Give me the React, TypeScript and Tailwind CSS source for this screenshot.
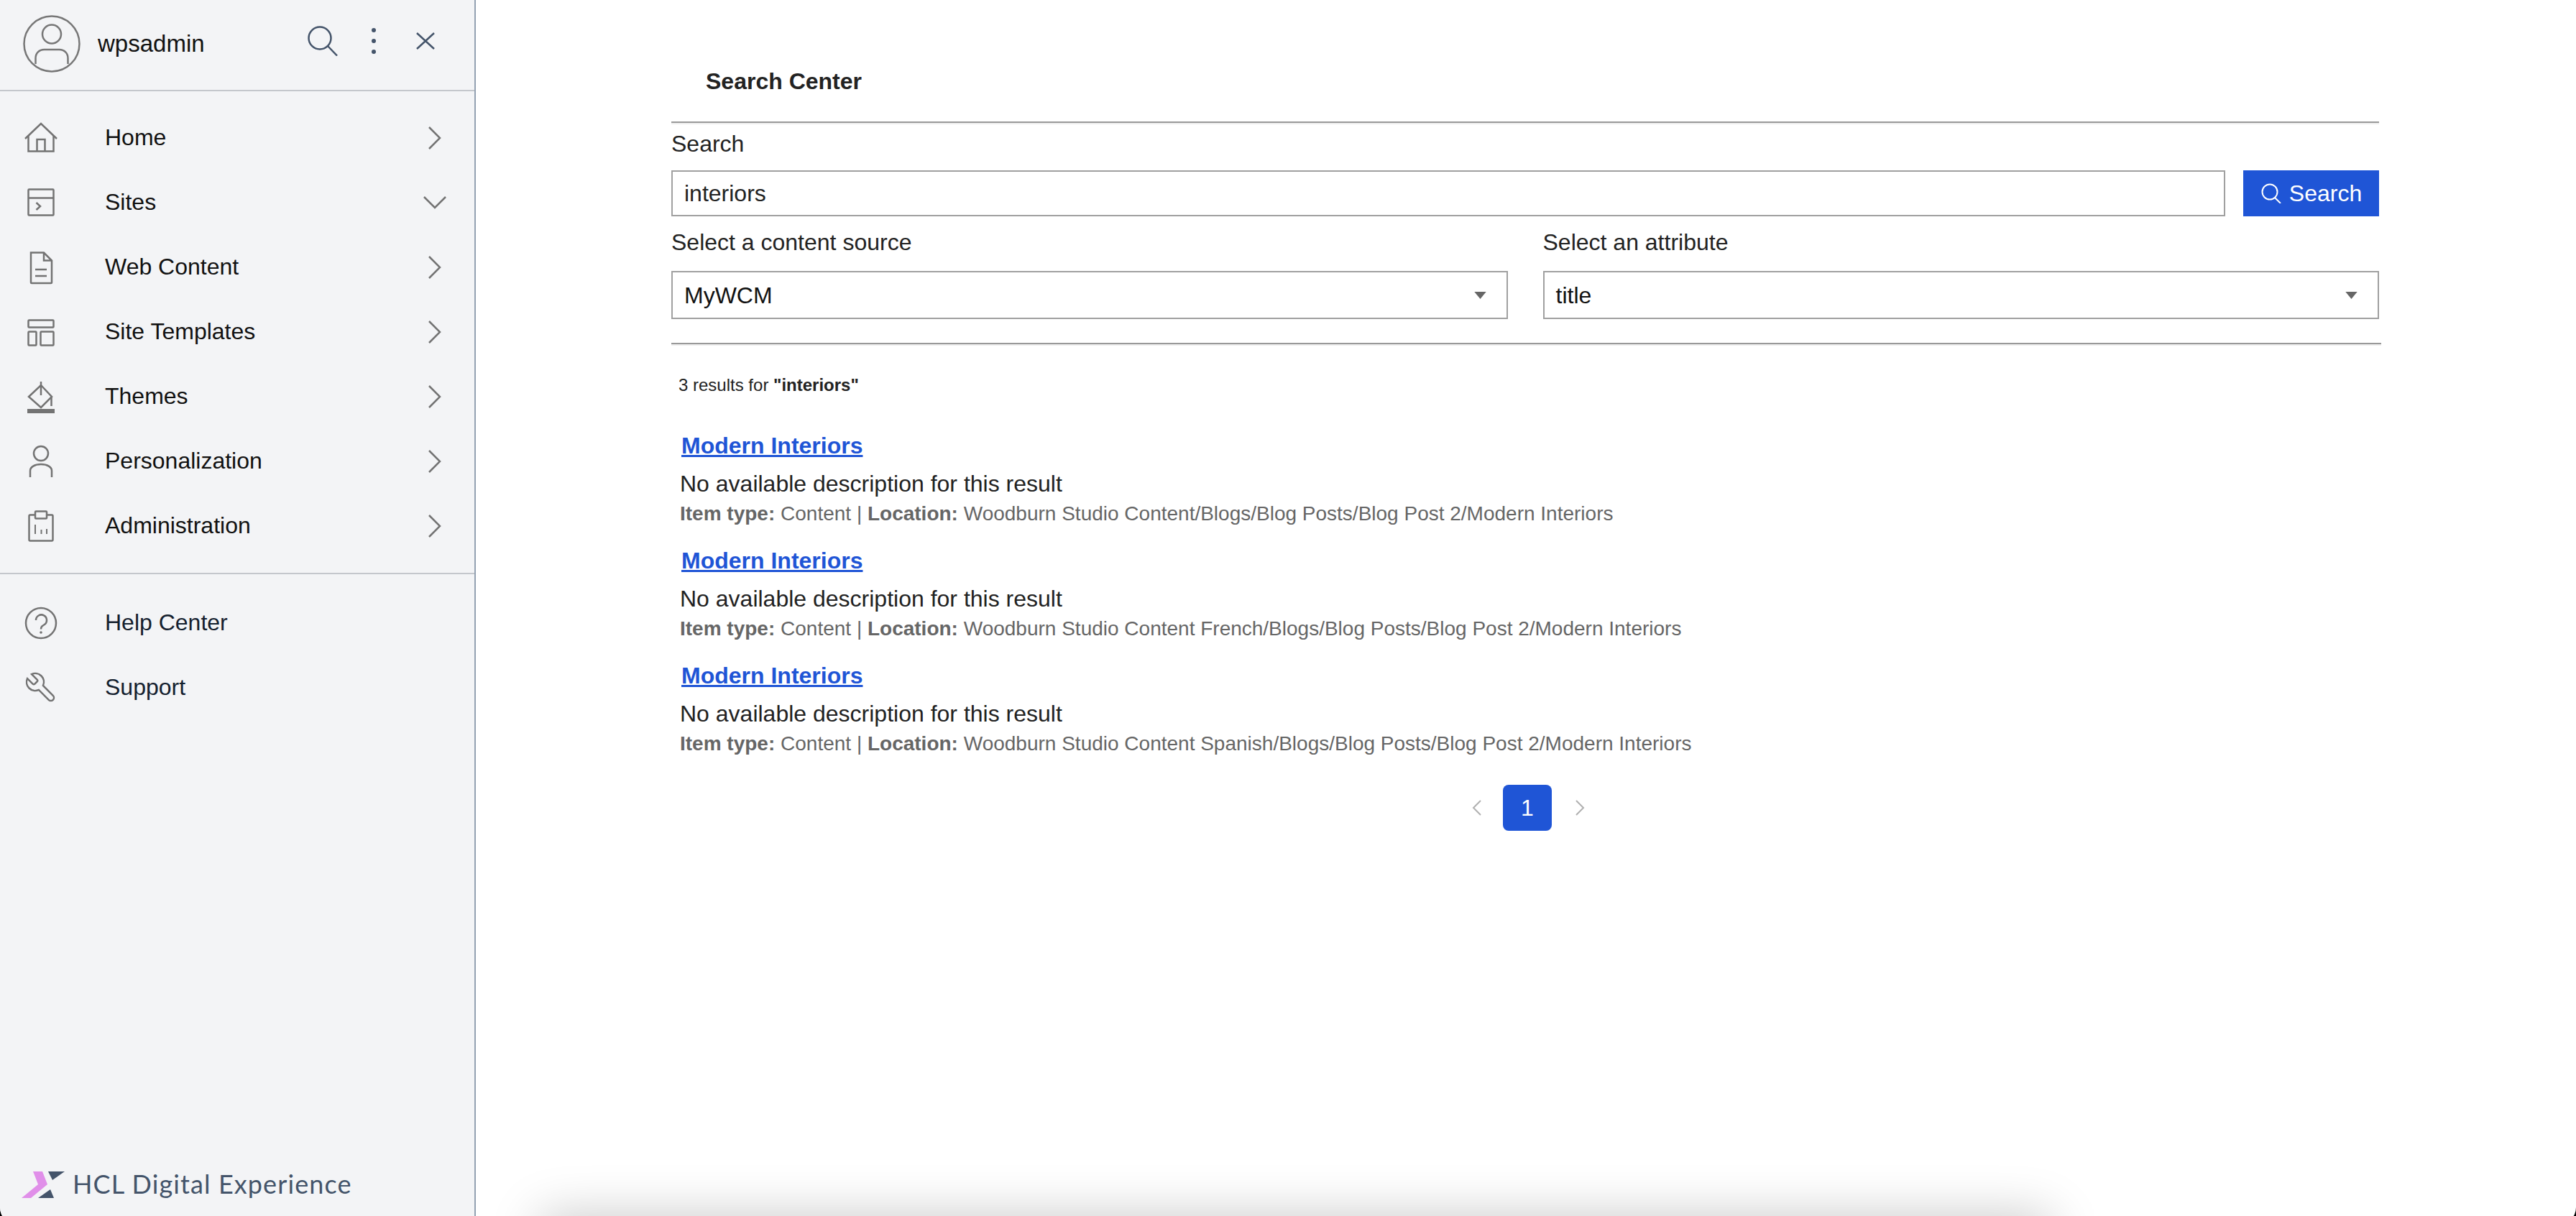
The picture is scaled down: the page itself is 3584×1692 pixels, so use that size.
const ink = '#737373';

const ChevronRight = () => (
  <svg width="20" height="32" viewBox="0 0 20 32" fill="none" stroke={ink} strokeWidth="2.5">
    <path d="M2 1l15 15L2 31" />
  </svg>
);

const ChevronDown = () => (
  <svg width="32" height="20" viewBox="0 0 32 20" fill="none" stroke={ink} strokeWidth="2.5">
    <path d="M1 2l15 15L31 2" />
  </svg>
);

const Icon = ({ children }: { children: React.ReactNode }) => (
  <svg width="48" height="48" viewBox="0 0 48 48" fill="none" stroke={ink} strokeWidth="2.5" className="shrink-0">
    {children}
  </svg>
);

const icons = {
  home: (
    <>
      <path d="M2 25L24 4l22 21" />
      <path d="M6.5 21v21.5h35V21" />
      <path d="M18.5 42V26h11v16" />
    </>
  ),
  sites: (
    <>
      <rect x="6.5" y="5.5" width="35" height="36" rx="1" />
      <path d="M6.5 17.5h35" />
      <path d="M17.5 24l5.5 5-5.5 5" />
    </>
  ),
  content: (
    <>
      <path d="M10 3.5h18l11 11V45a1 1 0 0 1-1 1H11a1 1 0 0 1-1-1z" />
      <path d="M28 3.5v11h11" />
      <path d="M16 27h16M16 36h16" />
    </>
  ),
  templates: (
    <>
      <rect x="6.5" y="7.5" width="35" height="10" rx="1" />
      <rect x="6.5" y="23.5" width="11" height="19" rx="1" />
      <rect x="23.5" y="23.5" width="18" height="19" rx="1" />
    </>
  ),
  themes: (
    <>
      <path d="M24 8L39 24 24 39 7 24z" />
      <path d="M24 3v19" />
      <path d="M38.5 24v13" />
      <rect x="5" y="41" width="38" height="6" fill={ink} stroke="none" />
    </>
  ),
  person: (
    <>
      <circle cx="24" cy="13" r="10" />
      <path d="M9 46v-9c0-5 6-9 15-9s15 4 15 9v9" />
    </>
  ),
  admin: (
    <>
      <rect x="7.5" y="8.5" width="33" height="36" rx="1.5" />
      <rect x="16" y="3.5" width="16" height="10" rx="1" fill="#f3f4f6" />
      <path d="M16 22v13M24.5 29v6M32 28v7" strokeWidth="2" />
    </>
  ),
  help: (
    <>
      <ellipse cx="24" cy="24" rx="21" ry="21" />
      <path d="M17 20a7.5 7.5 0 1 1 11.5 6.3c-3 1.9-4.5 2.7-4.5 6.2" />
      <circle cx="24" cy="37" r="1.8" fill={ink} stroke="none" />
    </>
  ),
  support: (
    <g transform="translate(48 0) scale(-2 2)" strokeWidth="1.25">
      <path d="M14.7 6.3a1 1 0 0 0 0 1.4l1.6 1.6a1 1 0 0 0 1.4 0l3.77-3.77a6 6 0 0 1-7.94 7.94l-6.91 6.91a2.12 2.12 0 0 1-3-3l6.91-6.91a6 6 0 0 1 7.94-7.94l-3.76 3.76z" />
    </g>
  ),
};

const menu = [
  { label: 'Home', icon: icons.home },
  { label: 'Sites', icon: icons.sites, open: true },
  { label: 'Web Content', icon: icons.content },
  { label: 'Site Templates', icon: icons.templates },
  { label: 'Themes', icon: icons.themes },
  { label: 'Personalization', icon: icons.person },
  { label: 'Administration', icon: icons.admin },
];

const results = [
  'Woodburn Studio Content/Blogs/Blog Posts/Blog Post 2/Modern Interiors',
  'Woodburn Studio Content French/Blogs/Blog Posts/Blog Post 2/Modern Interiors',
  'Woodburn Studio Content Spanish/Blogs/Blog Posts/Blog Post 2/Modern Interiors',
];

const Rule = ({ className }: { className: string }) => (
  <div className={`h-[2px] bg-[#999999] shadow-[0_2px_0_#eeeeee] ${className}`} />
);

const Select = ({ value }: { value: string }) => (
  <div className="flex h-[67px] items-center justify-between border-2 border-[#a0a0a0] pl-4 pr-[28px] text-[#111111]">
    <span className="pt-[1px]">{value}</span>
    <svg width="17" height="10" viewBox="0 0 18 11" fill="#666666">
      <path d="M0 0h18L9 11z" />
    </svg>
  </div>
);

const Sidebar = () => (
  <aside className="flex h-full w-[662px] shrink-0 flex-col border-r-2 border-[#93a1b1] bg-[#f3f4f6]">
    <header className="flex h-[127px] shrink-0 items-center border-b-2 border-[#c4c7cc] pl-[32px] pb-[4px]">
      <svg width="80" height="80" viewBox="0 0 80 80" fill="none" stroke="#777777" strokeWidth="2.5">
        <circle cx="40" cy="40" r="38.5" />
        <circle cx="40" cy="26.5" r="13" />
        <path d="M17.5 68v-8c0-7 5-12 12-12h21c7 0 12 5 12 12v8" />
      </svg>
      <span className="ml-[24px] text-[33px] text-[#111111]">wpsadmin</span>
      <svg width="42" height="42" viewBox="0 0 42 42" fill="none" stroke="#44546a" strokeWidth="2.5" className="mb-[8px] ml-[143px]">
        <circle cx="17" cy="17" r="15.5" />
        <path d="M28 28l13 13.500" />
      </svg>
      <svg width="8" height="38" viewBox="0 0 8 38" fill="#44546a" className="mb-[8px] ml-[46px]">
        <circle cx="4" cy="4" r="3" />
        <circle cx="4" cy="19" r="3" />
        <circle cx="4" cy="34" r="3" />
      </svg>
      <svg width="26" height="24" viewBox="0 0 26 24" fill="none" stroke="#44546a" strokeWidth="2.5" className="mb-[8px] ml-[55px]">
        <path d="M1 1l24 22M25 1L1 23" />
      </svg>
    </header>
    <nav className="pt-[20px]">
      {menu.map((item) => (
        <div key={item.label} className="flex h-[90px] items-center pl-[33px] text-[32px] text-[#111111]">
          <Icon>{item.icon}</Icon>
          <span className="ml-[65px] flex-1 pb-[3px]">{item.label}</span>
          {item.open ? (
            <span className="mr-[39px]">
              <ChevronDown />
            </span>
          ) : (
            <span className="mr-[45px]">
              <ChevronRight />
            </span>
          )}
        </div>
      ))}
    </nav>
    <div className="mt-[20px] h-[2px] bg-[#c4c7cc]" />
    <div className="pt-[23px]">
      {[
        { label: 'Help Center', icon: icons.help },
        { label: 'Support', icon: icons.support },
      ].map((item) => (
        <div key={item.label} className="flex h-[90px] items-center pl-[33px] text-[32px] text-[#14202e]">
          <Icon>{item.icon}</Icon>
          <span className="ml-[65px] pb-[2px]">{item.label}</span>
        </div>
      ))}
    </div>
    <div className="mt-auto flex items-center pb-[34px] pl-[30px]">
      <svg width="60" height="38" viewBox="0 0 60 38">
        <path d="M16 0h13l7 18L13 37H0l23-19z" fill="#e08fe9" />
        <path d="M37 0h23L43 12z" fill="#44546a" />
        <path d="M23 37h22l-5-12z" fill="#44546a" />
      </svg>
      <span className="mb-[3px] ml-[11px] font-['Lato',sans-serif] text-[36px] leading-[40px] tracking-[1.1px] text-[#44546a]">HCL Digital Experience</span>
    </div>
  </aside>
);

export default function App() {
  return (
    <div className="h-[1692px] overflow-hidden bg-black">
      {/* screenshot has the window's rounded corners at the bottom edge */}
      <div className="flex h-[1704px] overflow-hidden rounded-b-[24px] bg-white font-['Liberation_Sans',Arial,sans-serif] text-[32px] leading-[36px]">
        <Sidebar />
        <main className="relative flex-1 pl-[272px]">
          <div className="w-[2376px] pt-[95px]">
            <h1 className="pl-[48px] font-bold text-[#222222]">Search Center</h1>
            <Rule className="mt-[38px]" />
            <div className="mt-[11px] text-[#222222]">Search</div>
            <div className="mt-[19px] flex gap-[25px]">
              <input
                readOnly
                value="interiors"
                className="h-[64px] min-w-0 flex-1 border-2 border-[#a0a0a0] pl-4 text-[#222222] outline-none"
              />
              <button className="flex h-[64px] w-[189px] shrink-0 items-center justify-center gap-[10px] bg-[#1f55d6] text-white">
                <svg width="30" height="28" viewBox="0 0 30 28" fill="none" stroke="#ffffff" strokeWidth="2">
                  <circle cx="13" cy="12" r="10.500" />
                  <path d="M20 20l8 8" />
                </svg>
                Search
              </button>
            </div>
            <div className="mt-[18px] flex gap-[49px] text-[#222222]">
              <div className="flex-1">
                <div className="mb-[22px]">Select a content source</div>
                <Select value="MyWCM" />
              </div>
              <div className="flex-1">
                <div className="mb-[22px]">Select an attribute</div>
                <Select value="title" />
              </div>
            </div>
            <Rule className="mt-[33px] w-[2379px]" />
            <p className="mt-[43px] pl-[10px] text-[24px] leading-[28px] text-[#222222]">
              3 results for <b>"interiors"</b>
            </p>
            <div className="mt-[51px] pl-[12px]">
              {results.map((location, i) => (
                <div key={i} className="h-[160px]">
                  <a className="ml-[2px] block w-fit text-[32px] leading-[38px] font-bold text-[#1f55d6] underline decoration-[3px]">
                    Modern Interiors
                  </a>
                  <p className="mt-[16px] text-[#222222]">No available description for this result</p>
                  <p className="mt-[8px] text-[28px] leading-[32px] text-[#666666]">
                    <b>Item type:</b> Content | <b>Location:</b> {location}
                  </p>
                </div>
              ))}
            </div>
            <div className="mt-[11px] ml-[1114px] flex items-center">
              <svg width="14" height="22" viewBox="0 0 14 22" fill="none" stroke="#b0b0b0" strokeWidth="2">
                <path d="M12 1L2 11l10 10" />
              </svg>
              <span className="ml-[29px] flex h-[64px] w-[68px] items-center justify-center rounded-lg bg-[#1f55d6] text-white">1</span>
              <svg width="14" height="22" viewBox="0 0 14 22" fill="none" stroke="#b0b0b0" strokeWidth="2" className="ml-[32px]">
                <path d="M2 1l10 10L2 21" />
              </svg>
            </div>
          </div>
          <div className="absolute top-[1692px] left-[90px] h-[80px] w-[2100px] shadow-[0_0_70px_rgba(0,0,0,0.22)]" />
        </main>
      </div>
    </div>
  );
}
